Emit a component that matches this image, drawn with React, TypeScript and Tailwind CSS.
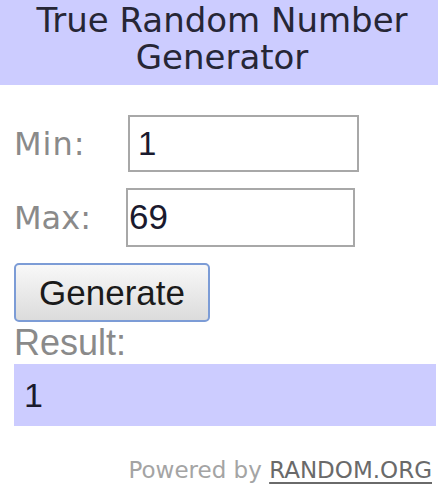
export default function App() {
  return (
    <div className="w-[440px] h-[500px] bg-white overflow-hidden font-['DejaVu_Sans',sans-serif]">
      <div className="w-[438px] h-[85px] bg-[#ccccff] text-center text-[34px] leading-[37px] text-[#262636] pt-[2px] pl-[6px]">
        True Random Number
        <br />
        Generator
      </div>

      <div className="pl-[14px]">
        <div className="flex items-center mt-[30px]">
          <span className="w-[114px] text-[32px] text-[#8a8a8a] tracking-[1px]">Min:</span>
          <div className="w-[231px] h-[57px] border-2 border-[#a8a8a8] flex items-center pl-[8px] text-[33px] text-[#1a1a2e] font-['Liberation_Sans',sans-serif]">
            1
          </div>
        </div>

        <div className="flex items-center mt-[16px]">
          <span className="w-[112px] text-[32px] text-[#8a8a8a]">Max:</span>
          <div className="w-[229px] h-[59px] border-2 border-[#a8a8a8] flex items-center pl-[1px] text-[35px] text-[#1a1a2e] font-['Liberation_Sans',sans-serif]">
            69
          </div>
        </div>

        <button className="mt-[16px] w-[196px] h-[59px] border-2 border-[#7c9cd6] rounded-[5px] bg-gradient-to-b from-[#f8f8f8] to-[#dcdcdc] text-[35px] leading-[40px] text-[#1a1a1a] font-['Liberation_Sans',sans-serif]">
          Generate
        </button>

        <div className="text-[36px] leading-[42px] text-[#8a8a8a] font-['Liberation_Sans',sans-serif]">
          Result:
        </div>

        <div className="w-[422px] h-[62px] bg-[#ccccff] flex items-center pl-[10px] text-[34px] text-[#1a1a2e] font-['Liberation_Sans',sans-serif]">
          1
        </div>

        <div className="text-right pr-[8px] mt-[30px] text-[23px] leading-[28px] text-[#a4a4a4]">
          Powered by{" "}
          <span className="underline underline-offset-[4px] text-[#6a6a6a]">RANDOM.ORG</span>
        </div>
      </div>
    </div>
  );
}
